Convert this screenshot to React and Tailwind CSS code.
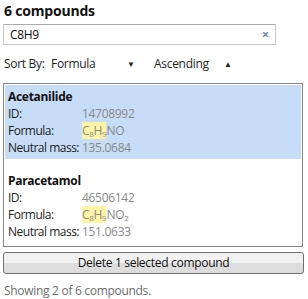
import React from "react";

const font = { fontFamily: '"Open Sans", "Noto Sans", sans-serif' };

const Sub = ({ children }) => (
  <sub className="text-[8px] align-baseline relative top-[2px]">{children}</sub>
);

const Formula = ({ rest }) => (
  <span className="text-[#8a8a8a]">
    <span className="bg-[#fff3a6]">C<Sub>8</Sub></span>
    <span className="bg-[#fff3a6]">H<Sub>9</Sub></span>
    {rest}
  </span>
);

const Row = ({ label, children }) => (
  <div className="flex h-[17px] items-center">
    <span className="w-[74px] shrink-0 whitespace-nowrap tracking-[-0.5px] text-[#1e1e1e]">{label}</span>
    <span className="text-[#8a8a8a]">{children}</span>
  </div>
);

const Compound = ({ name, id, rest, mass, selected }) => (
  <div className={selected ? "bg-[#c6dcf7] px-[3px] pt-[3px] pb-[3px] mb-[10px]" : "px-[3px] pt-[3px] pb-[3px]"}>
    <div className="h-[17px] flex items-center font-bold text-[#111]">{name}</div>
    <Row label="ID:">{id}</Row>
    <Row label="Formula:"><Formula rest={rest} /></Row>
    <Row label="Neutral mass:">{mass}</Row>
  </div>
);

export default function App() {
  return (
    <div className="w-[308px] h-[299px] bg-white text-[12px] leading-none tracking-[-0.3px]" style={font}>
      <div className="px-[4px] pt-[4px] h-[24px] text-[14px] font-bold text-[#111] tracking-[-0.2px]">6 compounds</div>
      <div className="mx-[3px] w-[273px] h-[21px] border border-[#c4c8cc] border-t-[#a8abb0] flex items-center justify-between pl-[6px] pr-[6px] text-[#111]">
        <span>C8H9</span>
        <span className="text-[#6b8bb3] text-[13px] font-bold">×</span>
      </div>
      <div className="flex items-center h-[38px] px-[4px] text-[#1e1e1e]">
        <span className="w-[47px]">Sort By:</span>
        <span className="w-[76px]">Formula</span>
        <span className="text-[8px] w-[27px]">▼</span>
        <span className="w-[70px]">Ascending</span>
        <span className="text-[8px]">▲</span>
      </div>
      <div className="mx-[3px] w-[300px] h-[164px] border border-[#828790] p-[1px]">
        <Compound name="Acetanilide" id="14708992" rest="NO" mass="135.0684" selected />
        <Compound name="Paracetamol" id="46506142" rest={<>NO<Sub>2</Sub></>} mass="151.0633" />
      </div>
      <div className="mx-[3px] mt-[5px] w-[301px] h-[22px] rounded-[3px] border border-[#707070] bg-gradient-to-b from-[#f2f2f2] from-50% to-[#dddddd] to-50% flex items-center justify-center text-[#111]">
        Delete 1 selected compound
      </div>
      <div className="px-[4px] pt-[11px] text-[#6d6d6d]">Showing 2 of 6 compounds.</div>
    </div>
  );
}
